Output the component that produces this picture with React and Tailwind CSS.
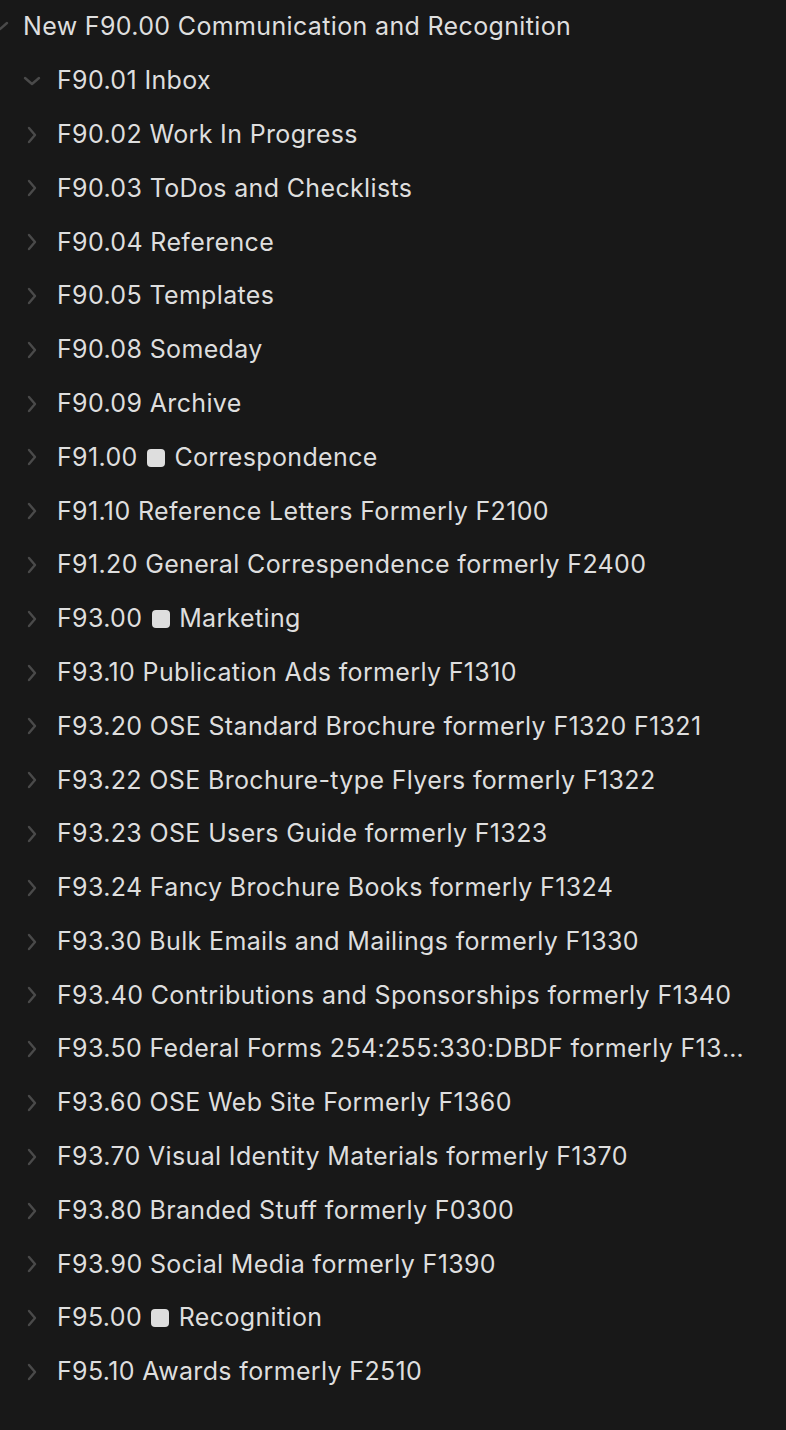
import React from "react";

const items = [
  { t: "F90.01 Inbox", open: true },
  { t: "F90.02 Work In Progress" },
  { t: "F90.03 ToDos and Checklists" },
  { t: "F90.04 Reference" },
  { t: "F90.05 Templates" },
  { t: "F90.08 Someday" },
  { t: "F90.09 Archive" },
  { t: "F91.00", sq: "Correspondence" },
  { t: "F91.10 Reference Letters Formerly F2100" },
  { t: "F91.20 General Correspendence formerly F2400" },
  { t: "F93.00", sq: "Marketing" },
  { t: "F93.10 Publication Ads formerly F1310" },
  { t: "F93.20 OSE Standard Brochure formerly F1320 F1321" },
  { t: "F93.22 OSE Brochure-type Flyers formerly F1322" },
  { t: "F93.23 OSE Users Guide formerly F1323" },
  { t: "F93.24 Fancy Brochure Books formerly F1324" },
  { t: "F93.30 Bulk Emails and Mailings formerly F1330" },
  { t: "F93.40 Contributions and Sponsorships formerly F1340" },
  { t: "F93.50 Federal Forms 254:255:330:DBDF formerly F1350" },
  { t: "F93.60 OSE Web Site Formerly F1360" },
  { t: "F93.70 Visual Identity Materials formerly F1370" },
  { t: "F93.80 Branded Stuff formerly F0300" },
  { t: "F93.90 Social Media formerly F1390" },
  { t: "F95.00", sq: "Recognition" },
  { t: "F95.10 Awards formerly F2510" },
];

function Chevron({ open }) {
  return open ? (
    <svg width="18" height="10" viewBox="0 0 18 10" fill="none">
      <path d="M2 2 L9 8 L16 2" stroke="#4a4a4a" strokeWidth="2.4" strokeLinecap="round" strokeLinejoin="round" />
    </svg>
  ) : (
    <svg width="10" height="18" viewBox="0 0 10 18" fill="none">
      <path d="M2 2 L8 9 L2 16" stroke="#4a4a4a" strokeWidth="2.4" strokeLinecap="round" strokeLinejoin="round" />
    </svg>
  );
}

export default function App() {
  return (
    <div
      className="w-[786px] h-[1430px] bg-[#181818] text-[#dedede] overflow-hidden"
      style={{ fontFamily: "Inter, 'Noto Sans', sans-serif" }}
    >
      <div className="flex flex-col">
        <div className="h-[54px] flex items-center text-[25px] tracking-[0.35px] relative">
          <div className="absolute left-[-9px] top-[21px]">
            <svg width="18" height="10" viewBox="0 0 18 10" fill="none">
              <path d="M2 2 L9 8 L16 2" stroke="#4a4a4a" strokeWidth="2.4" strokeLinecap="round" strokeLinejoin="round" />
            </svg>
          </div>
          <span className="pl-[23px]">New F90.00 Communication and Recognition</span>
        </div>
        {items.map((it, i) => (
          <div key={i} className="h-[53.8px] flex items-center text-[25px] tracking-[0.35px] pr-[42px]">
            <div className="w-[57px] shrink-0 flex items-center justify-start">
              {it.open ? (
                <div className="pl-[23px] flex"><Chevron open /></div>
              ) : (
                <div className="pl-[27px] flex"><Chevron /></div>
              )}
            </div>
            <span className="truncate min-w-0">
              {it.t}
              {it.sq && (
                <>
                  {" "}
                  <span className="inline-block w-[18px] h-[18px] rounded-[4px] bg-[#dedede] align-[-1px] mx-[2px]" />{" "}
                  {it.sq}
                </>
              )}
            </span>
          </div>
        ))}
      </div>
    </div>
  );
}
